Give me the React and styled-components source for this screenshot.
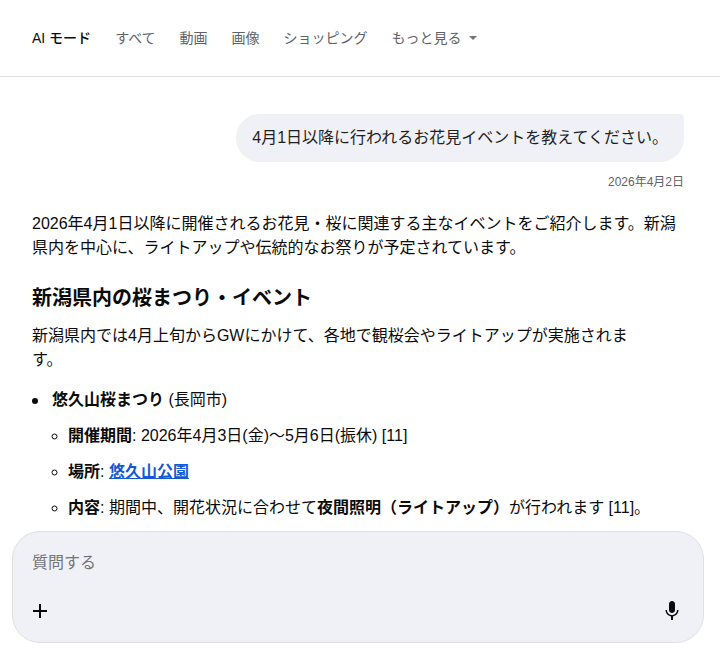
import React from "react";
import styled, { createGlobalStyle } from "styled-components";

const GlobalStyle = createGlobalStyle`
  html, body {
    margin: 0;
    padding: 0;
    background: #fff;
  }
  body {
    font-family: "Liberation Sans", "Noto Sans CJK JP", sans-serif;
    color: #1f1f1f;
  }
`;

const Page = styled.div`
  width: 720px;
  height: 655px;
  display: flex;
  flex-direction: column;
  overflow: hidden;
  position: relative;
`;
const Header = styled.header`
  height: 76px;
  flex: none;
  display: flex;
  align-items: center;
  gap: 24px;
  padding-left: 32px;
  border-bottom: 1px solid #e0e1e8;
`;
const NavItem = styled.a`
  font-size: 14px;
  line-height: 16px;
  padding-bottom: 1px;
  display: flex;
  align-items: center;
  color: ${(p) => (p.$active ? "#0b0b0b" : "#5f6368")};
  font-weight: ${(p) => (p.$active ? 500 : 400)};
`;
const Caret = styled.span`
  width: 0;
  height: 0;
  margin-left: 7px;
  margin-top: 1px;
  border-left: 4px solid transparent;
  border-right: 4px solid transparent;
  border-top: 4px solid #70757a;
`;
const Main = styled.main`
  flex: 1;
  padding: 37px 36px 0 32px;
  overflow: hidden;
`;
const UserRow = styled.div`
  display: flex;
  justify-content: flex-end;
`;
const Bubble = styled.div`
  background: #f0f1f6;
  border-radius: 24px 4px 24px 24px;
  height: 48px;
  box-sizing: border-box;
  padding: 0 16px 4px;
  display: flex;
  align-items: center;
  font-size: 16px;
  color: #1f1f1f;
`;
const DateText = styled.div`
  margin-top: 13px;
  text-align: right;
  font-size: 12px;
  line-height: 14px;
  color: #5f6368;
`;
const Para = styled.p`
  margin: ${(p) => p.$margin || "0"};
  font-size: 16px;
  line-height: 24px;
  max-width: ${(p) => p.$maxWidth || "none"};
  color: #0b0b0b;
`;
const Heading = styled.h2`
  margin: 24px 0 12px;
  font-size: 20px;
  line-height: 28px;
  font-weight: 700;
  color: #0b0b0b;
`;
const List = styled.ul`
  margin: 16px 0 0;
  padding: 0 0 0 20px;
  font-size: 16px;
  line-height: 24px;
  color: #0b0b0b;
  list-style: none;
`;
const SubList = styled.ul`
  margin: 12px 0 0;
  padding: 0 0 0 16px;
  list-style: circle;
`;
const TopItem = styled.li`
  position: relative;
  &::before {
    content: "";
    position: absolute;
    left: -20px;
    top: 10px;
    width: 6px;
    height: 6px;
    border-radius: 50%;
    background: #0b0b0b;
  }
`;
const Item = styled.li`
  margin-top: ${(p) => (p.$first ? "0" : "12px")};
`;
const LinkText = styled.a`
  color: #1558d6;
  font-weight: 700;
  text-decoration: underline;
`;
const Composer = styled.div`
  position: absolute;
  left: 12px;
  top: 531px;
  width: 692px;
  height: 112px;
  box-sizing: border-box;
  background: #f0f1f6;
  border: 1px solid #dfe0e6;
  border-radius: 28px;
  padding: 20px 19px 19px 19px;
  display: flex;
  flex-direction: column;
  justify-content: space-between;
`;
const Placeholder = styled.div`
  font-size: 16px;
  line-height: 22px;
  color: #70757a;
`;
const Tools = styled.div`
  display: flex;
  justify-content: space-between;
  align-items: center;
`;

const PlusIcon = () => (
  <svg width="16" height="16" viewBox="0 0 16 16" fill="none">
    <path d="M8 1v14M1 8h14" stroke="#0b0b0b" strokeWidth="2" />
  </svg>
);
const MicIcon = () => (
  <svg width="24" height="24" viewBox="0 0 24 24" fill="#0b0b0b">
    <path d="M12 14c1.66 0 3-1.34 3-3V5c0-1.66-1.34-3-3-3S9 3.34 9 5v6c0 1.66 1.34 3 3 3z" />
    <path d="M17 11c0 2.76-2.24 5-5 5s-5-2.24-5-5H5.5c0 3.03 2.27 5.9 5.5 6.4V21h2v-3.6c3.23-.5 5.5-3.37 5.5-6.4H17z" />
  </svg>
);

export default function App() {
  return (
    <Page>
      <GlobalStyle />
      <Header>
        <NavItem $active>AI モード</NavItem>
        <NavItem>すべて</NavItem>
        <NavItem>動画</NavItem>
        <NavItem>画像</NavItem>
        <NavItem>ショッピング</NavItem>
        <NavItem>
          もっと見る
          <Caret />
        </NavItem>
      </Header>
      <Main>
        <UserRow>
          <Bubble>4月1日以降に行われるお花見イベントを教えてください。</Bubble>
        </UserRow>
        <DateText>2026年4月2日</DateText>
        <Para $margin="23px 0 0">
          2026年4月1日以降に開催されるお花見・桜に関連する主なイベントをご紹介します。新潟県内を中心に、ライトアップや伝統的なお祭りが予定されています。
        </Para>
        <Heading>新潟県内の桜まつり・イベント</Heading>
        <Para $maxWidth="600px">
          新潟県内では4月上旬からGWにかけて、各地で観桜会やライトアップが実施されます。
        </Para>
        <List>
          <TopItem>
            <strong>悠久山桜まつり</strong> (長岡市)
            <SubList>
              <Item $first>
                <strong>開催期間</strong>: 2026年4月3日(金)〜5月6日(振休) [11]
              </Item>
              <Item>
                <strong>場所</strong>: <LinkText>悠久山公園</LinkText>
              </Item>
              <Item>
                <strong>内容</strong>: 期間中、開花状況に合わせて
                <strong>夜間照明（ライトアップ）</strong>が行われます [11]。
              </Item>
            </SubList>
          </TopItem>
        </List>
      </Main>
      <Composer>
        <Placeholder>質問する</Placeholder>
        <Tools>
          <PlusIcon />
          <MicIcon />
        </Tools>
      </Composer>
    </Page>
  );
}
